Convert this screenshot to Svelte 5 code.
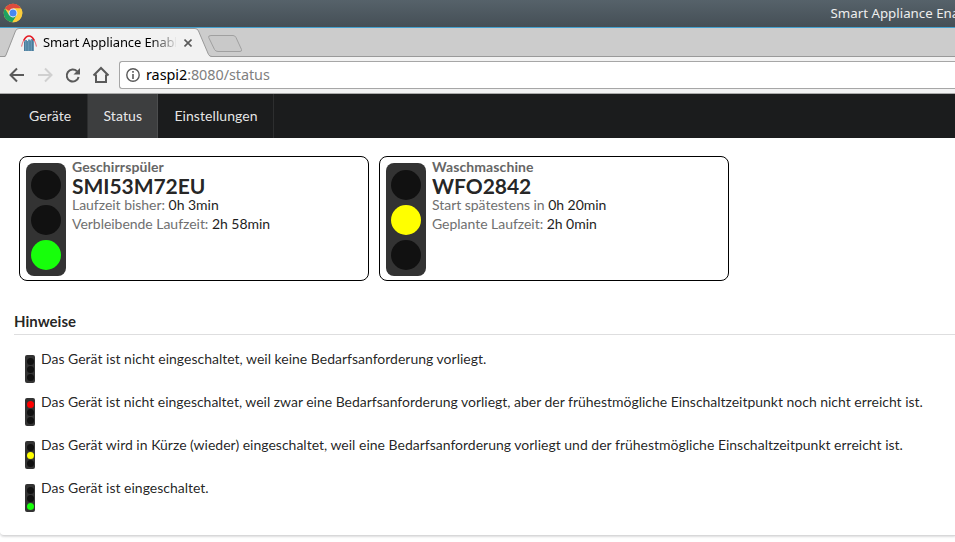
<script>
  const cards = [
    { type: 'Geschirrspüler', model: 'SMI53M72EU', lamp: 'green', rows: [['Laufzeit bisher:', '0h 3min'], ['Verbleibende Laufzeit:', '2h 58min']] },
    { type: 'Waschmaschine', model: 'WFO2842', lamp: 'yellow', rows: [['Start spätestens in', '0h 20min'], ['Geplante Laufzeit:', '2h 0min']] }
  ];
  const hints = [
    ['', 'Das Gerät ist nicht eingeschaltet, weil keine Bedarfsanforderung vorliegt.'],
    ['red', 'Das Gerät ist nicht eingeschaltet, weil zwar eine Bedarfsanforderung vorliegt, aber der frühestmögliche Einschaltzeitpunkt noch nicht erreicht ist.'],
    ['yellow', 'Das Gerät wird in Kürze (wieder) eingeschaltet, weil eine Bedarfsanforderung vorliegt und der frühestmögliche Einschaltzeitpunkt erreicht ist.'],
    ['green', 'Das Gerät ist eingeschaltet.']
  ];
  const colors = { red: '#ff0000', yellow: '#ffff00', green: '#17ff0b' };
  const lamps = ['red', 'yellow', 'green'];
</script>

<div class="screen">
  <div class="titlebar">
    <svg class="chrome" width="20" height="20" viewBox="0 0 20 20">
      <circle cx="10" cy="10" r="9.3" fill="#fbcd3c" />
      <path d="M10 10 1.900 5.400A9.300 9.300 0 0 1 18.100 5.500H10Z" fill="#dd4b3e" />
      <path d="M1.900 5.400A9.300 9.300 0 0 0 9.400 19.300L13.700 12.400 10 10 6 12Z" fill="#1da261" />
      <path d="M10 5.500h8.100A9.300 9.300 0 0 1 9.400 19.300l4.400-7Z" fill="#fbcd3c" />
      <circle cx="10" cy="10" r="4.400" fill="#f4f4f4" />
      <circle cx="10" cy="10" r="3.500" fill="#4688f1" />
    </svg>
    <span class="wintitle">Smart Appliance Enabler</span>
  </div>

  <div class="tabstrip">
    <svg class="tabshape" width="250" height="29" viewBox="0 0 250 29">
      <path d="M0 29H4Q5.500 29 6 27.500L15.500 3Q16.500 .5 19 .5H195Q197.500 .5 198.500 3L208.500 26.500Q209.500 28.500 212 29Z" fill="#f2f2f2" />
      <path d="M0 28.500H4Q5.500 28.500 6 27L15.500 3Q16.500 .5 19 .5H195Q197.500 .5 198.500 3L208.500 26.500Q209.500 28.500 212 28.500H250" fill="none" stroke="#999" />
      <path d="M211 7.500H233Q235 7.500 236 9.500L241.500 21.500Q242 23.500 240 23.500H218Q215.500 23.500 214.500 21.500L208.700 9.500Q208 7.500 211 7.500Z" fill="#c9c9c9" stroke="#a0a0a0" />
    </svg>
    <div class="tabcontent">
      <svg width="16" height="16" viewBox="0 0 16 16">
        <path d="M3 16V6.500L4 5h2v1h1V4.500h2V6l1-2h2l1 2.500V16Z" fill="#6595b3" />
        <path d="M3.500 7v9M6 6v10M9 5.500v10.500M11.500 5v11" stroke="#41708f" stroke-width=".7" />
        <path d="M.5 11.500C1.200 8.500 2.200 6 3.500 4M15.500 11.500C14.800 8.500 13.800 6 12.500 4" fill="none" stroke="#ea8088" stroke-width="1.200" />
        <path d="M2.800 5.500C4.200 2.500 6 1 8 1s3.800 1.500 5.200 4.500" fill="none" stroke="#e51b25" stroke-width="1.700" />
      </svg>
      <span class="tabtitle">Smart Appliance Enabler</span>
      <svg class="close" width="8" height="8" viewBox="0 0 8 8"><path d="M.5.5l7 7M7.500.5l-7 7" stroke="#5a5a5a" stroke-width="1.600" /></svg>
    </div>
  </div>

  <div class="toolbar">
    <svg class="tools" width="119" height="36" viewBox="0 0 119 36" fill="none" stroke-width="2">
      <path d="M24 18H11M17 11.500 10.500 18 17 24.500" stroke="#5a5a5a" />
      <path d="M38 18H51M45 11.500 51.500 18 45 24.500" stroke="#d0d0d0" />
      <path d="M77 14.300A6 6 0 1 0 78.600 20" stroke="#5a5a5a" />
      <path d="M80 11v6.500h-6.500Z" fill="#5a5a5a" />
      <path d="M93.500 18.500 101 11l7.500 7.500M96 17.500V25h10V17.500" stroke="#5a5a5a" />
    </svg>
    <div class="omnibox">
      <svg width="14" height="14" viewBox="0 0 14 14"><circle cx="7" cy="7" r="6.200" fill="none" stroke="#5a5a5a" stroke-width="1.400" /><path d="M7 6v5M7 3v1.700" stroke="#5a5a5a" stroke-width="1.600" /></svg>
      <span class="url">raspi2<i>:8080/status</i></span>
    </div>
  </div>

  <nav>
    <a class="first">Geräte</a><a class="active">Status</a><a class="last">Einstellungen</a>
  </nav>

  <main>
    <div class="cards">
      {#each cards as c}
        <section class="card">
          <div class="light">
            {#each lamps as l}<b style:background={c.lamp === l ? colors[l] : '#111'}></b>{/each}
          </div>
          <div class="info">
            <div class="type">{c.type}</div>
            <div class="model">{c.model}</div>
            {#each c.rows as [label, value]}
              <div class="row">{label} <span>{value}</span></div>
            {/each}
          </div>
        </section>
      {/each}
    </div>
    <h4>Hinweise</h4>
    {#each hints as [lamp, text]}
      <div class="hint">
        <div class="mini">
          {#each lamps as l}<b style:background={lamp === l ? colors[l] : '#111'}></b>{/each}
        </div>
        <span class={lamp}>{text}</span>
      </div>
    {/each}
  </main>
</div>

<style>
  :global(body) { margin: 0; background: #fff; overflow: hidden; }
  .screen { width: 955px; height: 542px; overflow: hidden; background: #fff; font-family: Lato, sans-serif; font-size: 14px; color: rgba(0,0,0,.87); white-space: nowrap; }
  svg { display: block; flex: none; }
  .titlebar { box-sizing: border-box; height: 28px; display: flex; background: linear-gradient(#56626a, #454f56); border-bottom: 1px solid #45a1cf; font: 13.3px/27px "Noto Sans", sans-serif; color: #eee; }
  .chrome { margin: 3px 0 0 3px; }
  .wintitle { margin-left: 807.5px; }
  .tabstrip { height: 29px; background: linear-gradient(#ccc 28px, #999 28px); position: relative; }
  .tabshape { position: absolute; left: 0; top: 0; }
  .tabcontent { position: relative; display: flex; align-items: center; height: 29px; padding-left: 21px; }
  .tabtitle { width: 133px; margin-left: 6px; overflow: hidden; font: 13px/28px "Noto Sans", sans-serif; letter-spacing: -.12px; color: #000; height: 29px; -webkit-mask-image: linear-gradient(90deg, #000 108px, transparent 136px); mask-image: linear-gradient(90deg, #000 108px, transparent 136px); }
  .close { margin-left: 8px; }
  .toolbar { box-sizing: border-box; height: 37px; display: flex; background: #f2f2f2; border-bottom: 1px solid #aaa; }
  .omnibox { box-sizing: border-box; flex: 1; height: 28px; margin-top: 4px; border: 1px solid #a6a6a6; border-right: 0; border-radius: 3px 0 0 3px; background: #fff; display: flex; align-items: center; padding-left: 6px; }
  .url { margin-left: 6px; font: 14.4px/26px "Noto Sans", sans-serif; letter-spacing: -.05px; height: 26px; color: #000; }
  .url i { font-style: normal; color: #808080; }
  nav { height: 44px; display: flex; padding-left: 13px; background: #1b1c1d; }
  nav a { box-sizing: border-box; height: 44px; line-height: 44px; padding: 0 16px; border-right: 1px solid #2d2e2f; color: rgba(255,255,255,.9); letter-spacing: .08px; }
  nav .first { width: 75px; }
  nav .active { width: 70px; padding-left: 15.5px; background: #3d3e3f; border-color: #4c4d4e; }
  nav .last { width: 116px; padding-left: 16.4px; }
  main { box-sizing: border-box; height: 398px; padding: 18px 0 0 14px; border-bottom: 1px solid #d8d8d9; box-shadow: 0 1px 2px rgba(34,36,38,.15); border-bottom-left-radius: 4px; }
  .cards { display: flex; gap: 10px; padding-left: 5px; }
  .card { box-sizing: border-box; width: 350px; height: 125px; border: 1px solid #000; border-radius: 8px; display: flex; padding: 6px; }
  .light { box-sizing: border-box; width: 40px; height: 113px; border-radius: 8px; background: #333; display: flex; flex-direction: column; align-items: center; gap: 5px; padding-top: 7px; }
  .light b { width: 30px; height: 30px; border-radius: 50%; }
  .info { margin: -6px 0 0 6px; }
  .type { font-weight: 700; line-height: 20px; letter-spacing: .1px; color: #666; }
  .model { font-size: 21px; font-weight: 700; line-height: 18px; letter-spacing: -.05px; }
  .row { line-height: 19px; color: #707070; letter-spacing: -.03px; }
  .row span { color: #1e1e1e; }
  h4 { box-sizing: border-box; height: 26px; margin: 28px 0 16px; border-bottom: 1px solid #dededf; font-size: 15px; line-height: 24px; font-weight: 700; }
  .hint { height: 43px; display: flex; padding-left: 11px; line-height: 16px; }
  .hint .red { letter-spacing: -.02px; }
  .mini { box-sizing: border-box; width: 10px; height: 28px; margin: 4px 6px 0 0; padding: 3px 0 0 2px; border-radius: 2px; background: #333; display: flex; flex-direction: column; gap: 1px; }
  .mini b { width: 7px; height: 7px; border-radius: 50%; }
</style>
